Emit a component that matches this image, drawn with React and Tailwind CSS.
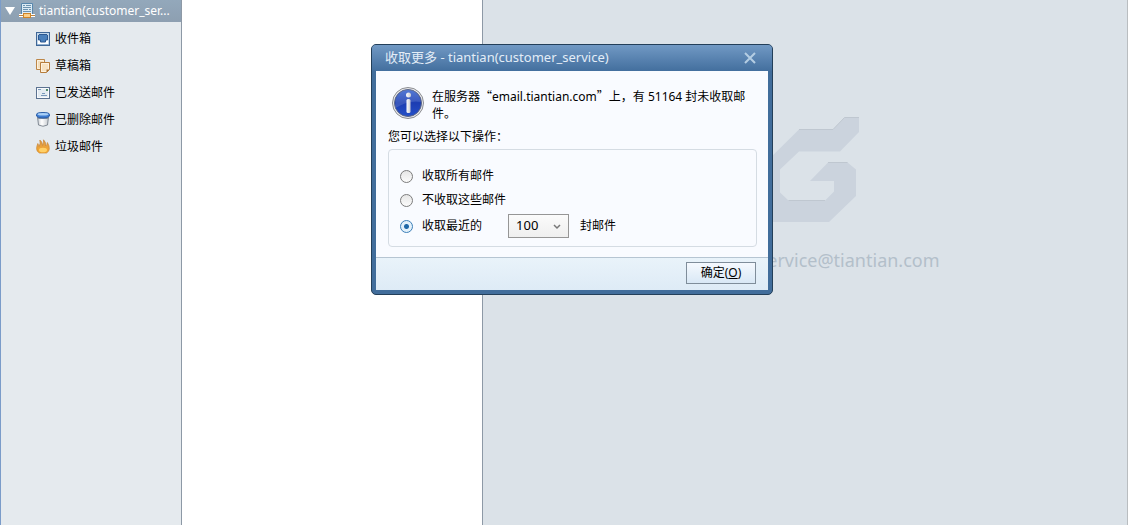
import React, { useState } from 'react';

const InboxIcon = () => (
    <svg width="14" height="14" viewBox="0 0 14 14" aria-hidden="true">
        <rect x="0.5" y="0.5" width="13" height="13" fill="#c3d7ea" stroke="#3f6797" />
        <path d="M1 12h12v1h-12z" fill="#8fafd0" />
        <path d="M2 8h2v2h6v-2h2v4h-10z" fill="#fff" />
        <path d="M3 2h8l1 6h-2v2h-6v-2h-2z" fill="#4a80bb" />
        <path d="M3 2h8v1h-8z" fill="#2c5890" />
        <path d="M2.500 3v5h2v2h5v-2h2v-5" fill="none" stroke="#2c5890" />
    </svg>
);

const DraftIcon = () => (
    <svg width="14" height="14" viewBox="0 0 14 14" aria-hidden="true">
        <path d="M0.5 0.5h8v10h-8z" fill="#f3dfbd" stroke="#bd8748" />
        <path d="M1.500 1.500h6v8h-6z" fill="none" stroke="#fbf1df" />
        <path d="M4.500 3.500h9v7l-3 3h-6z" fill="#f6e2c2" stroke="#b67d3c" />
        <path d="M5.500 4.500h7v5.500l-2.500 2.500h-4.500z" fill="none" stroke="#fdf3e2" />
        <path d="M13.500 10.500h-3v3z" fill="#a56c2c" />
    </svg>
);

const SentIcon = () => (
    <svg width="14" height="12" viewBox="0 0 14 12" aria-hidden="true">
        <rect x="0.5" y="0.5" width="13" height="11" fill="#e3ebf1" stroke="#5b7290" />
        <path d="M1.500 1.500h11v9h-11z" fill="none" stroke="#f8fafc" />
        <path d="M2 2.500h3M6 6.500h3M5 8.500h6" stroke="#7898ba" />
        <rect x="10" y="2" width="2" height="2" fill="#4f8c6b" />
    </svg>
);

const TrashIcon = () => (
    <svg width="14" height="15" viewBox="0 0 14 15" aria-hidden="true">
        <defs>
            <linearGradient id="bin" x1="0" y1="0" x2="1" y2="0">
                <stop offset="0" stopColor="#c9ced3" />
                <stop offset="0.4" stopColor="#fff" />
                <stop offset="1" stopColor="#c4c9ce" />
            </linearGradient>
        </defs>
        <path d="M1.500 5l1 8q4.500 2.500 9 0l1-8z" fill="url(#bin)" stroke="#6b7580" strokeWidth="0.8" />
        <path d="M2 5.500h10l-.3 1.300h-9.400z" fill="#5b6f89" />
        <path d="M0.5 2.500q0-2 6.500-2t6.500 2v1.500q-1 2-6.500 2t-6.500-2z" fill="#3d7bd0" stroke="#2e60a8" />
        <ellipse cx="7" cy="2.300" rx="5.500" ry="1.200" fill="#a9d0f7" />
    </svg>
);

const FireIcon = () => (
    <svg width="14" height="15" viewBox="0 0 14 15" aria-hidden="true">
        <defs>
            <linearGradient id="fire" x1="0" y1="0" x2="0" y2="1">
                <stop offset="0" stopColor="#dd9a48" />
                <stop offset="1" stopColor="#f7a92c" />
            </linearGradient>
        </defs>
        <path
            d="M3.500 14Q.5 12.500.6 9.500Q.6 7.500 1.800 4.500L3.200 7.500Q4.800 4.500 3.800 1Q6.500 2.500 6.500 6.500Q8 4 7.500.8Q10.200 3 9.600 7Q11 6 11.400 3.500Q13.600 7 13.300 10Q13 12.800 10.500 14z"
            fill="url(#fire)"
            stroke="#c98638"
            strokeWidth="0.7"
        />
        <ellipse cx="7" cy="11" rx="4" ry="2.300" fill="#ffd067" />
    </svg>
);

const AccountIcon = () => (
    <svg width="16" height="16" viewBox="0 0 16 16" className="shrink-0" aria-hidden="true">
        <path d="M2.500 0.500h11v11h-11z" fill="#dcebf5" stroke="#5787ad" />
        <path d="M4 2.500h2M7 2.500h5M4 4.500h8M4 6.500h5M10 6.500h2M4 8.500h8" stroke="#6c93b0" />
        <path d="M0 11h16v1h-16z" fill="#fff" />
        <path d="M0 12h16v1h-16z" fill="#b98445" />
        <path d="M0 13h16v1h-16z" fill="#fff" />
        <rect x="4.500" y="10.500" width="7" height="4" fill="#fbd08a" stroke="#cd8429" />
    </svg>
);

const InfoIcon = () => (
    <svg width="32" height="32" viewBox="0 0 32 32" className="shrink-0" aria-hidden="true">
        <defs>
            <linearGradient id="ball" x1="0" y1="0" x2="0" y2="1">
                <stop offset="0" stopColor="#3a66cf" />
                <stop offset="0.500" stopColor="#1c3db2" />
                <stop offset="1" stopColor="#2550c8" />
            </linearGradient>
            <linearGradient id="ink" x1="0" y1="0" x2="1" y2="0">
                <stop offset="0" stopColor="#fff" />
                <stop offset="1" stopColor="#c9cbd2" />
            </linearGradient>
        </defs>
        <circle cx="16" cy="16" r="15.500" fill="#e9e9ea" stroke="#8b8d92" />
        <circle cx="16" cy="16" r="13.500" fill="url(#ball)" stroke="#5c6788" />
        <path d="M3.500 16a12.500 12.500 0 0 1 25-1q-11-2-25 6z" fill="#fff" opacity="0.130" />
        <circle cx="16.500" cy="8" r="2.500" fill="url(#ink)" />
        <rect x="14.500" y="12" width="4" height="14" rx="1.500" fill="url(#ink)" />
    </svg>
);

const Logo = () => (
    <svg width="108" height="106" viewBox="0 0 108 106" aria-hidden="true">
        <path
            d="M108 0.500H93.500L82 12.500H48L0 60V105H78L105 79V52.500L96.500 45.500H77L59 64H83V74.500L74 83.500H37.500L29 75.500V52.500L48 34.500H89L108 15z"
            fill="#cbd3dd"
        />
        <path d="M108 0.500H93.500L82 12.500H48M96.500 45.500H77M74 83.500H37.500" fill="none" stroke="#bfc7d0" />
    </svg>
);

const folders = [
    { name: '收件箱', icon: InboxIcon },
    { name: '草稿箱', icon: DraftIcon },
    { name: '已发送邮件', icon: SentIcon },
    { name: '已删除邮件', icon: TrashIcon },
    { name: '垃圾邮件', icon: FireIcon },
];

const Sidebar = () => (
    <aside className="w-[182px] shrink-0 border-l border-r border-l-[#7b9cc9] border-r-[#8d99a6] bg-[#e5eaee]">
        <button
            type="button"
            className="flex h-[22px] w-full items-center bg-linear-to-b from-[#93a8bb] to-[#8d9fb1] pl-1 text-white"
        >
            <svg width="10" height="8" viewBox="0 0 10 8" className="mr-1 shrink-0" aria-hidden="true">
                <path d="M0 0h10l-5 8z" fill="#fff" />
            </svg>
            <AccountIcon />
            <span className="ml-1 leading-4">tiantian(customer_ser...</span>
        </button>
        <nav className="pt-[3px]">
            {folders.map(({ name, icon: Icon }) => (
                <a key={name} href="#" className="flex h-[27px] items-center gap-1 pl-[34px]">
                    <span className="flex w-4 justify-center">
                        <Icon />
                    </span>
                    {name}
                </a>
            ))}
        </nav>
    </aside>
);

const Radio = ({ value, choice, onChoose, children }) => (
    <label className="flex h-6 items-center gap-[9px]">
        <input
            type="radio"
            name="fetch"
            checked={choice === value}
            onChange={() => onChoose(value)}
            className="h-[13px] w-[13px] appearance-none rounded-full border border-[#7c7c7c] bg-linear-to-b from-[#e6e6e6] to-[#fbfbfb] checked:border-[#3c7fb8] checked:bg-[radial-gradient(circle,#1f68a8_0_2px,#e3f1fb_3px)]"
        />
        {children}
    </label>
);

// Curly quotes take a full em in the Chinese face
const Quote = ({ children }) => <span className="font-['Noto_Sans_CJK_SC',sans-serif]">{children}</span>;

const FetchDialog = () => {
    const [choice, setChoice] = useState('recent');

    return (
        <div
            role="dialog"
            aria-labelledby="fetch-title"
            className="absolute top-11 left-[371px] w-[402px] rounded-[5px] border border-[#233f59] bg-[#416d9b] px-1 pb-1"
        >
            <header className="-mx-1 flex h-[26px] items-center justify-between rounded-t bg-linear-to-b from-[#7199c4] to-[#436f9e] pr-4 pl-[13px]">
                <h1 id="fetch-title" className="text-[13px] text-[#e3edf7]">
                    收取更多 - tiantian(customer_service)
                </h1>
                <button type="button" aria-label="关闭">
                    <svg width="12" height="12" viewBox="0 0 12 12" aria-hidden="true">
                        <path d="M1 1l10 10M11 1l-10 10" stroke="#b4cde3" strokeWidth="2" />
                    </svg>
                </button>
            </header>

            <div className="bg-[#f9fbff] pt-4 pr-[11px] pb-[10px] pl-3">
                <div className="flex gap-2 pl-1">
                    <InfoIcon />
                    <p lang="zh-CN" className="pr-2 leading-[17px]">
                        在服务器<Quote>“</Quote>email.tiantian.com<Quote>”</Quote>上，有 51164 封未收取邮件。
                    </p>
                </div>
                <p className="mt-[6px] leading-[17px]">您可以选择以下操作：</p>

                <fieldset className="mt-1 h-[98px] rounded border border-[#d5dce3] px-[11px] pt-[14px]">
                    <Radio value="all" choice={choice} onChoose={setChoice}>收取所有邮件</Radio>
                    <Radio value="none" choice={choice} onChoose={setChoice}>不收取这些邮件</Radio>
                    <div className="flex items-center pt-[2px]">
                        <Radio value="recent" choice={choice} onChoose={setChoice}>收取最近的</Radio>
                        <div className="relative mr-[11px] ml-[26px]">
                            <select
                                aria-label="收取数量"
                                defaultValue="100"
                                className="h-6 w-[61px] appearance-none border border-[#969696] bg-linear-to-b from-[#fbfbfb] to-[#efefef] pl-[7px] text-[13px]"
                            >
                                <option>50</option>
                                <option>100</option>
                                <option>200</option>
                            </select>
                            <svg
                                width="8"
                                height="6"
                                viewBox="0 0 8 6"
                                className="pointer-events-none absolute top-[10px] right-2"
                                aria-hidden="true"
                            >
                                <path d="M1 1l3 3l3-3" fill="none" stroke="#777" strokeWidth="1.500" />
                            </svg>
                        </div>
                        <span>封邮件</span>
                    </div>
                </fieldset>
            </div>

            <footer className="flex h-[33px] justify-end border-t border-[#b6c5d2] bg-linear-to-b from-[#e9f3fa] to-[#deebf6] px-3 pt-1">
                <button
                    type="button"
                    className="h-[22px] w-[70px] border border-[#7f8d9a] bg-linear-to-b from-[#f5f9fe] to-[#d9e8f5]"
                >
                    确定(<u>O</u>)
                </button>
            </footer>
        </div>
    );
};

export default function App() {
    return (
        <div className="relative flex h-screen overflow-hidden bg-white font-['Noto_Sans','Noto_Sans_CJK_SC',sans-serif] text-xs text-black">
            <Sidebar />
            <section className="w-[300px] shrink-0 bg-white" />
            <main className="mr-px flex flex-1 flex-col items-center border-l border-r border-l-[#8d99a6] border-r-[#b9bdc0] bg-[#dbe2e8] pt-[117px]">
                <Logo />
                <p className="mt-[23px] text-lg text-[#b3bfca]">customer_service@tiantian.com</p>
            </main>

            <FetchDialog />
        </div>
    );
}
